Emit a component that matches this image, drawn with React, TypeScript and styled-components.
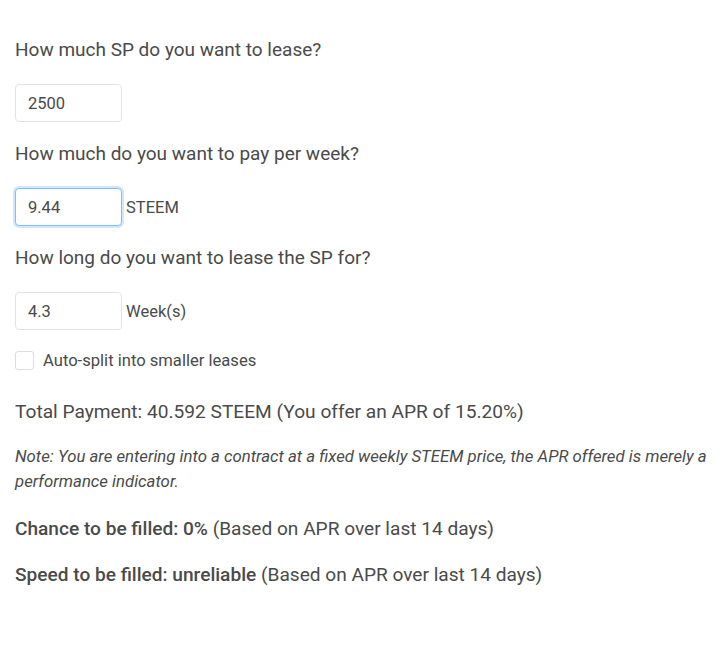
import React from "react";
import styled, { createGlobalStyle } from "styled-components";

const Global = createGlobalStyle`
  html, body { margin: 0; padding: 0; background: #fff; }
  body { font-family: Roboto, "Noto Sans", sans-serif; color: #4a4a4a; }
`;

const Page = styled.div`
  padding: 38px 8px 0 15px;
  display: flex;
  flex-direction: column;
`;

const Question = styled.div`
  font-size: 19px;
  line-height: 24px;
  color: #4a4a4a;
  margin-bottom: 22px;
`;

const Row = styled.div`
  display: flex;
  align-items: center;
  gap: 4px;
  margin-bottom: 20px;
`;

const Input = styled.input<{ $focused?: boolean }>`
  box-sizing: border-box;
  width: 107px;
  height: 38px;
  padding: 0 12px;
  font-family: Roboto, sans-serif;
  font-size: 16.5px;
  color: #4a4a4a;
  border: 1px solid ${(p) => (p.$focused ? "#80bdff" : "#e3e3e3")};
  border-radius: 4px;
  outline: none;
  box-shadow: ${(p) => (p.$focused ? "0 0 0 2px rgba(0,123,255,0.18)" : "none")};
  background: #fff;
`;

const Unit = styled.span`
  font-size: 16.5px;
  color: #4a4a4a;
`;

const CheckRow = styled.label`
  display: flex;
  align-items: center;
  gap: 9px;
  font-size: 16.6px;
  color: #4a4a4a;
  margin-top: 1px;
  margin-bottom: 29px;
`;

const Box = styled.span`
  box-sizing: border-box;
  width: 19px;
  height: 19px;
  border: 1px solid #ddd;
  border-radius: 3px;
  background: #fff;
`;

const Total = styled.div`
  font-size: 19.15px;
  line-height: 26px;
  color: #4a4a4a;
  margin-bottom: 19px;
`;

const Note = styled.div`
  font-size: 16.75px;
  line-height: 25px;
  font-style: italic;
  color: #4a4a4a;
  margin-bottom: 23px;
`;

const Stat = styled.div`
  font-size: 19.1px;
  line-height: 24px;
  color: #4a4a4a;
  margin-bottom: 22px;
  b { font-weight: 500; }
`;

export default function App() {
  return (
    <>
      <Global />
      <Page>
        <Question>How much SP do you want to lease?</Question>
        <Row>
          <Input defaultValue="2500" />
        </Row>
        <Question>How much do you want to pay per week?</Question>
        <Row>
          <Input $focused defaultValue="9.44" />
          <Unit>STEEM</Unit>
        </Row>
        <Question>How long do you want to lease the SP for?</Question>
        <Row>
          <Input defaultValue="4.3" />
          <Unit>Week(s)</Unit>
        </Row>
        <CheckRow>
          <Box />
          Auto-split into smaller leases
        </CheckRow>
        <Total>Total Payment: 40.592 STEEM (You offer an APR of 15.20%)</Total>
        <Note>
          Note: You are entering into a contract at a fixed weekly STEEM price, the APR offered is merely a performance indicator.
        </Note>
        <Stat>
          <b>Chance to be filled: 0%</b> (Based on APR over last 14 days)
        </Stat>
        <Stat>
          <b>Speed to be filled: unreliable</b> (Based on APR over last 14 days)
        </Stat>
      </Page>
    </>
  );
}
